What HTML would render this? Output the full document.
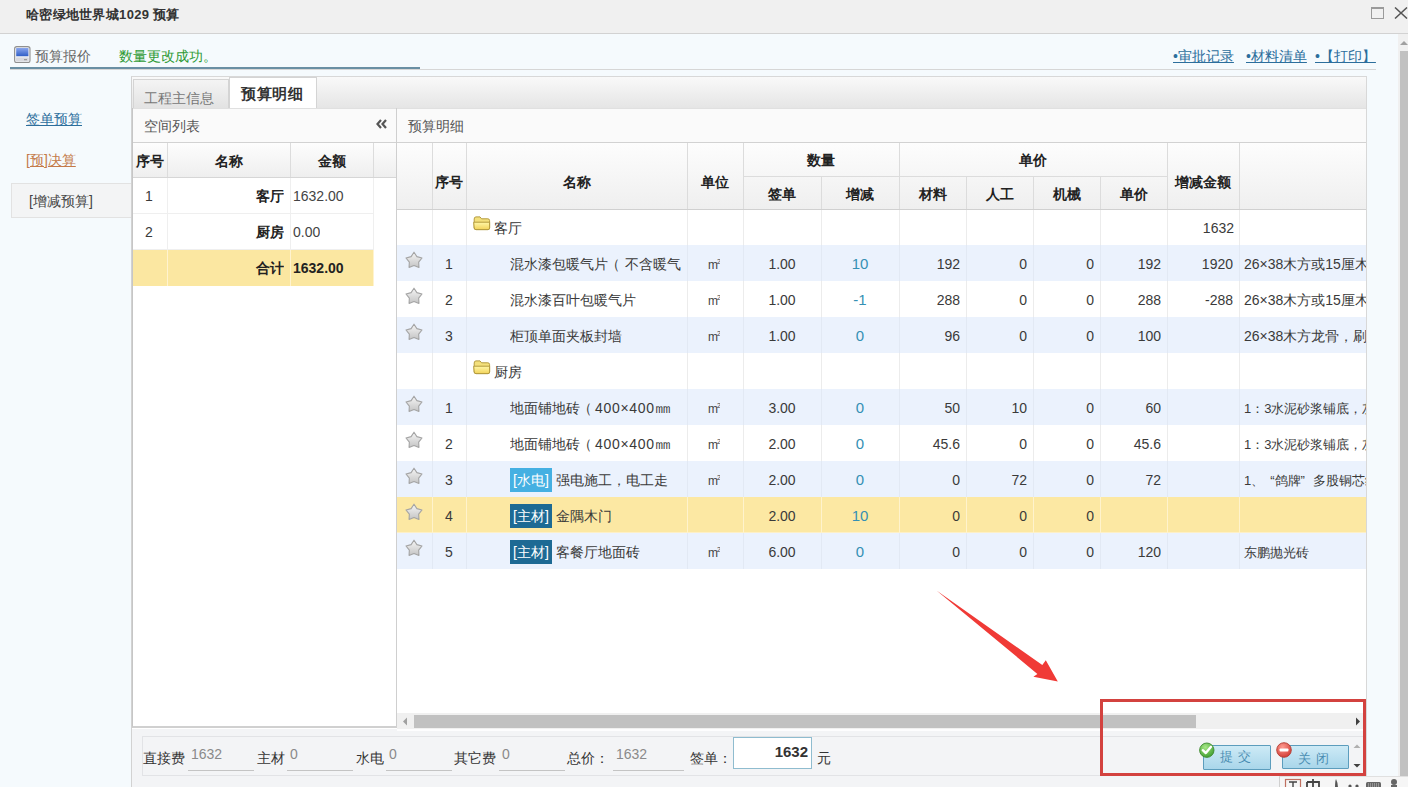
<!DOCTYPE html><html><head><meta charset="utf-8"><style>
*{margin:0;padding:0;box-sizing:border-box}
html,body{width:1408px;height:787px;overflow:hidden}
body{position:relative;background:#f5fafd;font-family:"Liberation Sans",sans-serif;font-size:14px;color:#333}
.a{position:absolute;white-space:nowrap}
.c{position:absolute;white-space:nowrap;overflow:hidden;line-height:36px;font-size:14px;color:#3a3a3a}
.th{position:absolute;white-space:nowrap;overflow:hidden;font-weight:bold;color:#222;text-align:center;font-size:14px}
.link{color:#2c6e9c;text-decoration:underline}
</style></head><body>
<div class="a" style="left:0;top:0;width:1408px;height:34px;background:#f0f0f0;border-bottom:1px solid #d2d2d2"></div>
<div class="a" style="left:26px;top:6px;font-size:13px;font-weight:bold;color:#333;line-height:18px;letter-spacing:0.3px">哈密绿地世界城1029 预算</div>
<div class="a" style="left:1371px;top:7px;width:13px;height:12px;border:1px solid #9a9a9a;border-top-width:2px"></div>
<svg class="a" style="left:1394px;top:7px" width="14" height="12"><path d="M1 0.5L13 11.5M13 0.5L1 11.5" stroke="#555" stroke-width="1.5"/></svg>
<div class="a" style="left:1398px;top:34px;width:10px;height:753px;background:#f0f0f0"></div>
<svg class="a" style="left:1400px;top:40px" width="8" height="6"><path d="M0 5L4 1L8 5Z" fill="#a0a0a0"/></svg>
<div class="a" style="left:1400px;top:51px;width:8px;height:736px;background:#c1c1c1"></div>
<svg class="a" style="left:14px;top:46px" width="17" height="17" viewBox="0 0 17 17"><defs><linearGradient id="scr" x1="0" y1="0" x2="0" y2="1"><stop offset="0" stop-color="#8aa6ee"/><stop offset="1" stop-color="#2f5ec6"/></linearGradient></defs><rect x="0.6" y="0.6" width="15.4" height="16" rx="2.2" fill="#eef0f4" stroke="#909090" stroke-width="1.1"/><rect x="2.2" y="2" width="12.2" height="8.2" fill="url(#scr)"/><rect x="2" y="11.4" width="12.6" height="4" rx="0.8" fill="#d8d9de"/><rect x="10" y="13.2" width="3" height="1" fill="#8a8a8a"/></svg>
<div class="a" style="left:35px;top:47px;line-height:18px;color:#666">预算报价</div>
<div class="a" style="left:119px;top:47px;line-height:18px;color:#2f9a36">数量更改成功。</div>
<div class="a" style="left:10px;top:69px;width:1366px;height:1px;background:#d6d6d6"></div>
<div class="a" style="left:10px;top:67px;width:410px;height:2px;background:#6a8fa3"></div>
<div class="a link" style="left:1173px;top:47px;line-height:18px">•审批记录</div>
<div class="a link" style="left:1246px;top:47px;line-height:18px">•材料清单</div>
<div class="a link" style="left:1315px;top:47px;line-height:18px">•【打印】</div>
<div class="a link" style="left:26px;top:110px;line-height:18px;color:#2c6e9c">签单预算</div>
<div class="a link" style="left:26px;top:151px;line-height:18px;color:#c47a4a">[预]决算</div>
<div class="a" style="left:11px;top:183px;width:122px;height:35px;background:#f3f4f5;border:1px solid #e2e2e2;border-right:none"></div>
<div class="a" style="left:29px;top:192px;line-height:18px;color:#444">[增减预算]</div>
<div class="a" style="left:131px;top:76px;width:1236px;height:711px;border:1px solid #d8d8d8;border-left:1px solid #d2d2d2;border-bottom:none;background:#fff"></div>
<div class="a" style="left:132px;top:77px;width:1234px;height:32px;background:linear-gradient(#f9f9f9,#e5e5e5);border-bottom:1px solid #cfcfcf"></div>
<div class="a" style="left:133px;top:79px;width:96px;height:30px;background:linear-gradient(#f4f4f4,#e2e2e2);border:1px solid #d4d4d4;border-bottom:none"></div>
<div class="a" style="left:144px;top:89px;line-height:18px;color:#777">工程主信息</div>
<div class="a" style="left:229px;top:77px;width:88px;height:32px;background:#fff;border:1px solid #d4d4d4;border-bottom:none"></div>
<div class="a" style="left:241px;top:85px;line-height:18px;color:#333;font-weight:bold;font-size:15px;letter-spacing:0.5px">预算明细</div>
<div class="a" style="left:132px;top:108px;width:265px;height:620px;background:#fff;border-left:1px solid #c6c6c6;border-right:1px solid #cfcfcf;border-bottom:2px solid #d0d0d0"></div>
<div class="a" style="left:133px;top:108px;width:263px;height:36px;background:#fafafa;border-bottom:2px solid #d2d2d2;border-top:1px solid #e0e0e0"></div>
<div class="a" style="left:144px;top:117px;line-height:18px;color:#555">空间列表</div>
<svg class="a" style="left:376px;top:119px" width="11" height="10"><path d="M5 1L1.5 5L5 9M10 1L6.5 5L10 9" stroke="#555" stroke-width="2.2" fill="none"/></svg>
<div class="a" style="left:133px;top:143px;width:263px;height:35px;background:linear-gradient(#fdfdfd,#eeeeee)"></div>
<div class="a" style="left:167px;top:143px;width:1px;height:35px;background:#dcdcdc"></div>
<div class="a" style="left:290px;top:143px;width:1px;height:35px;background:#dcdcdc"></div>
<div class="a" style="left:373px;top:143px;width:1px;height:35px;background:#dcdcdc"></div>
<div class="th" style="left:133px;top:144px;width:34px;line-height:35px">序号</div>
<div class="th" style="left:167px;top:144px;width:123px;line-height:35px">名称</div>
<div class="th" style="left:290px;top:144px;width:83px;line-height:35px">金额</div>
<div class="a" style="left:133px;top:178px;width:240px;height:36px;background:#fff;border-bottom:1px solid #efefef"></div>
<div class="a" style="left:167px;top:178px;width:1px;height:36px;background:#efefef"></div>
<div class="a" style="left:290px;top:178px;width:1px;height:36px;background:#efefef"></div>
<div class="a" style="left:373px;top:178px;width:1px;height:36px;background:#efefef"></div>
<div class="c" style="left:145px;top:178px">1</div>
<div class="c" style="left:167px;top:178px;width:117px;text-align:right;font-weight:bold;color:#222">客厅</div>
<div class="c" style="left:293px;top:178px;font-weight:normal;color:#444">1632.00</div>
<div class="a" style="left:133px;top:214px;width:240px;height:36px;background:#fff;border-bottom:1px solid #efefef"></div>
<div class="a" style="left:167px;top:214px;width:1px;height:36px;background:#efefef"></div>
<div class="a" style="left:290px;top:214px;width:1px;height:36px;background:#efefef"></div>
<div class="a" style="left:373px;top:214px;width:1px;height:36px;background:#efefef"></div>
<div class="c" style="left:145px;top:214px">2</div>
<div class="c" style="left:167px;top:214px;width:117px;text-align:right;font-weight:bold;color:#222">厨房</div>
<div class="c" style="left:293px;top:214px;font-weight:normal;color:#444">0.00</div>
<div class="a" style="left:133px;top:250px;width:240px;height:36px;background:#fbe7a1;border-bottom:1px solid #fbe7a1"></div>
<div class="a" style="left:167px;top:250px;width:1px;height:36px;background:#fff3cf"></div>
<div class="a" style="left:290px;top:250px;width:1px;height:36px;background:#fff3cf"></div>
<div class="a" style="left:373px;top:250px;width:1px;height:36px;background:#fff3cf"></div>
<div class="c" style="left:145px;top:250px"></div>
<div class="c" style="left:167px;top:250px;width:117px;text-align:right;font-weight:bold;color:#222">合计</div>
<div class="c" style="left:293px;top:250px;font-weight:bold;color:#222">1632.00</div>
<div class="a" style="left:397px;top:108px;width:969px;height:35px;background:#fafafa;border-bottom:1px solid #d2d2d2;border-top:1px solid #e0e0e0"></div>
<div class="a" style="left:408px;top:117px;line-height:18px;color:#555">预算明细</div>
<div class="a" style="left:397px;top:143px;width:969px;height:66px;background:linear-gradient(#fdfdfd,#efefef)"></div>
<div class="a" style="left:743px;top:176px;width:424px;height:1px;background:#dcdcdc"></div>
<div class="a" style="left:432px;top:143px;width:1px;height:66px;background:#dcdcdc"></div>
<div class="a" style="left:466px;top:143px;width:1px;height:66px;background:#dcdcdc"></div>
<div class="a" style="left:687px;top:143px;width:1px;height:66px;background:#dcdcdc"></div>
<div class="a" style="left:743px;top:143px;width:1px;height:66px;background:#dcdcdc"></div>
<div class="a" style="left:821px;top:176px;width:1px;height:33px;background:#dcdcdc"></div>
<div class="a" style="left:899px;top:143px;width:1px;height:66px;background:#dcdcdc"></div>
<div class="a" style="left:966px;top:176px;width:1px;height:33px;background:#dcdcdc"></div>
<div class="a" style="left:1033px;top:176px;width:1px;height:33px;background:#dcdcdc"></div>
<div class="a" style="left:1100px;top:176px;width:1px;height:33px;background:#dcdcdc"></div>
<div class="a" style="left:1167px;top:143px;width:1px;height:66px;background:#dcdcdc"></div>
<div class="a" style="left:1239px;top:143px;width:1px;height:66px;background:#dcdcdc"></div>
<div class="th" style="left:432px;top:149px;width:34px;line-height:66px">序号</div>
<div class="th" style="left:466px;top:149px;width:221px;line-height:66px">名称</div>
<div class="th" style="left:687px;top:149px;width:56px;line-height:66px">单位</div>
<div class="th" style="left:743px;top:144px;width:156px;line-height:33px">数量</div>
<div class="th" style="left:743px;top:178px;width:78px;line-height:33px">签单</div>
<div class="th" style="left:821px;top:178px;width:78px;line-height:33px">增减</div>
<div class="th" style="left:899px;top:144px;width:268px;line-height:33px">单价</div>
<div class="th" style="left:899px;top:178px;width:67px;line-height:33px">材料</div>
<div class="th" style="left:966px;top:178px;width:67px;line-height:33px">人工</div>
<div class="th" style="left:1033px;top:178px;width:67px;line-height:33px">机械</div>
<div class="th" style="left:1100px;top:178px;width:67px;line-height:33px">单价</div>
<div class="th" style="left:1167px;top:149px;width:72px;line-height:66px">增减金额</div>
<div class="a" style="left:397px;top:209px;width:969px;height:36px;background:#fff"></div>
<div class="a" style="left:432px;top:209px;width:1px;height:36px;background:#ececec"></div>
<div class="a" style="left:466px;top:209px;width:1px;height:36px;background:#ececec"></div>
<div class="a" style="left:687px;top:209px;width:1px;height:36px;background:#ececec"></div>
<div class="a" style="left:743px;top:209px;width:1px;height:36px;background:#ececec"></div>
<div class="a" style="left:821px;top:209px;width:1px;height:36px;background:#ececec"></div>
<div class="a" style="left:899px;top:209px;width:1px;height:36px;background:#ececec"></div>
<div class="a" style="left:966px;top:209px;width:1px;height:36px;background:#ececec"></div>
<div class="a" style="left:1033px;top:209px;width:1px;height:36px;background:#ececec"></div>
<div class="a" style="left:1100px;top:209px;width:1px;height:36px;background:#ececec"></div>
<div class="a" style="left:1167px;top:209px;width:1px;height:36px;background:#ececec"></div>
<div class="a" style="left:1239px;top:209px;width:1px;height:36px;background:#ececec"></div>
<svg class="a" style="left:473px;top:216px" width="18" height="15" viewBox="0 0 18 15"><defs><linearGradient id="fg" x1="0" y1="0" x2="0" y2="1"><stop offset="0" stop-color="#fff7a8"/><stop offset="1" stop-color="#f2d35a"/></linearGradient></defs><path d="M1.2 3Q1.2 0.9 3 0.9L7 0.9L8.6 2.8L14.8 2.8Q16.6 2.8 16.6 4.6L16.6 12Q16.6 13.6 15 13.6L3 13.6Q1.2 13.6 1.2 12Z" fill="#f3e07c" stroke="#b49b3e" stroke-width="1"/><path d="M0.7 6.2L16.6 6.2L16.6 12Q16.6 13.6 15 13.6L3 13.6Q1.4 13.6 1.2 12Z" fill="url(#fg)" stroke="#b49b3e" stroke-width="1"/></svg>
<div class="c" style="left:494px;top:210px;color:#333">客厅</div>
<div class="c" style="left:1167px;top:210px;width:67px;text-align:right">1632</div>
<div class="a" style="left:397px;top:245px;width:969px;height:36px;background:#ebf2fd"></div>
<div class="a" style="left:432px;top:245px;width:1px;height:36px;background:#e2e9f4"></div>
<div class="a" style="left:466px;top:245px;width:1px;height:36px;background:#e2e9f4"></div>
<div class="a" style="left:687px;top:245px;width:1px;height:36px;background:#e2e9f4"></div>
<div class="a" style="left:743px;top:245px;width:1px;height:36px;background:#e2e9f4"></div>
<div class="a" style="left:821px;top:245px;width:1px;height:36px;background:#e2e9f4"></div>
<div class="a" style="left:899px;top:245px;width:1px;height:36px;background:#e2e9f4"></div>
<div class="a" style="left:966px;top:245px;width:1px;height:36px;background:#e2e9f4"></div>
<div class="a" style="left:1033px;top:245px;width:1px;height:36px;background:#e2e9f4"></div>
<div class="a" style="left:1100px;top:245px;width:1px;height:36px;background:#e2e9f4"></div>
<div class="a" style="left:1167px;top:245px;width:1px;height:36px;background:#e2e9f4"></div>
<div class="a" style="left:1239px;top:245px;width:1px;height:36px;background:#e2e9f4"></div>
<svg class="a" style="left:405px;top:251px" width="18" height="18" viewBox="0 0 18 18"><defs><linearGradient id="sg" x1="0" y1="0" x2="0" y2="1"><stop offset="0" stop-color="#f6f6f6"/><stop offset="1" stop-color="#c4c4c4"/></linearGradient></defs><path d="M9.00 1.20L11.88 5.64L16.99 7.00L13.66 11.11L13.94 16.40L9.00 14.50L4.06 16.40L4.34 11.11L1.01 7.00L6.12 5.64Z" fill="url(#sg)" stroke="#a4a4a4" stroke-width="1.1" stroke-linejoin="round"/></svg>
<div class="c" style="left:445px;top:246px">1</div>
<div class="c" style="left:510px;top:246px;width:175px">混水漆包暖气片<span style="margin-left:-2px;margin-right:5px">（</span>不含暖气</div>
<div class="c" style="left:708px;top:244px;font-size:12px;letter-spacing:-1px;color:#444">m<span style="font-size:7px;vertical-align:5px">2</span></div>
<div class="c" style="left:743px;top:246px;width:78px;text-align:center">1.00</div>
<div class="c" style="left:821px;top:246px;width:78px;text-align:center;color:#3590b4;font-size:15px">10</div>
<div class="c" style="left:899px;top:246px;width:61px;text-align:right">192</div>
<div class="c" style="left:966px;top:246px;width:61px;text-align:right">0</div>
<div class="c" style="left:1033px;top:246px;width:61px;text-align:right">0</div>
<div class="c" style="left:1100px;top:246px;width:61px;text-align:right">192</div>
<div class="c" style="left:1167px;top:246px;width:66px;text-align:right">1920</div>
<div class="c" style="left:1244px;top:246px;width:122px;font-size:14px">26×38木方或15厘木</div>
<div class="a" style="left:397px;top:281px;width:969px;height:36px;background:#fff"></div>
<div class="a" style="left:432px;top:281px;width:1px;height:36px;background:#ececec"></div>
<div class="a" style="left:466px;top:281px;width:1px;height:36px;background:#ececec"></div>
<div class="a" style="left:687px;top:281px;width:1px;height:36px;background:#ececec"></div>
<div class="a" style="left:743px;top:281px;width:1px;height:36px;background:#ececec"></div>
<div class="a" style="left:821px;top:281px;width:1px;height:36px;background:#ececec"></div>
<div class="a" style="left:899px;top:281px;width:1px;height:36px;background:#ececec"></div>
<div class="a" style="left:966px;top:281px;width:1px;height:36px;background:#ececec"></div>
<div class="a" style="left:1033px;top:281px;width:1px;height:36px;background:#ececec"></div>
<div class="a" style="left:1100px;top:281px;width:1px;height:36px;background:#ececec"></div>
<div class="a" style="left:1167px;top:281px;width:1px;height:36px;background:#ececec"></div>
<div class="a" style="left:1239px;top:281px;width:1px;height:36px;background:#ececec"></div>
<svg class="a" style="left:405px;top:287px" width="18" height="18" viewBox="0 0 18 18"><defs><linearGradient id="sg" x1="0" y1="0" x2="0" y2="1"><stop offset="0" stop-color="#f6f6f6"/><stop offset="1" stop-color="#c4c4c4"/></linearGradient></defs><path d="M9.00 1.20L11.88 5.64L16.99 7.00L13.66 11.11L13.94 16.40L9.00 14.50L4.06 16.40L4.34 11.11L1.01 7.00L6.12 5.64Z" fill="url(#sg)" stroke="#a4a4a4" stroke-width="1.1" stroke-linejoin="round"/></svg>
<div class="c" style="left:445px;top:282px">2</div>
<div class="c" style="left:510px;top:282px;width:175px">混水漆百叶包暖气片</div>
<div class="c" style="left:708px;top:280px;font-size:12px;letter-spacing:-1px;color:#444">m<span style="font-size:7px;vertical-align:5px">2</span></div>
<div class="c" style="left:743px;top:282px;width:78px;text-align:center">1.00</div>
<div class="c" style="left:821px;top:282px;width:78px;text-align:center;color:#3590b4;font-size:15px">-1</div>
<div class="c" style="left:899px;top:282px;width:61px;text-align:right">288</div>
<div class="c" style="left:966px;top:282px;width:61px;text-align:right">0</div>
<div class="c" style="left:1033px;top:282px;width:61px;text-align:right">0</div>
<div class="c" style="left:1100px;top:282px;width:61px;text-align:right">288</div>
<div class="c" style="left:1167px;top:282px;width:66px;text-align:right">-288</div>
<div class="c" style="left:1244px;top:282px;width:122px;font-size:14px">26×38木方或15厘木</div>
<div class="a" style="left:397px;top:317px;width:969px;height:36px;background:#ebf2fd"></div>
<div class="a" style="left:432px;top:317px;width:1px;height:36px;background:#e2e9f4"></div>
<div class="a" style="left:466px;top:317px;width:1px;height:36px;background:#e2e9f4"></div>
<div class="a" style="left:687px;top:317px;width:1px;height:36px;background:#e2e9f4"></div>
<div class="a" style="left:743px;top:317px;width:1px;height:36px;background:#e2e9f4"></div>
<div class="a" style="left:821px;top:317px;width:1px;height:36px;background:#e2e9f4"></div>
<div class="a" style="left:899px;top:317px;width:1px;height:36px;background:#e2e9f4"></div>
<div class="a" style="left:966px;top:317px;width:1px;height:36px;background:#e2e9f4"></div>
<div class="a" style="left:1033px;top:317px;width:1px;height:36px;background:#e2e9f4"></div>
<div class="a" style="left:1100px;top:317px;width:1px;height:36px;background:#e2e9f4"></div>
<div class="a" style="left:1167px;top:317px;width:1px;height:36px;background:#e2e9f4"></div>
<div class="a" style="left:1239px;top:317px;width:1px;height:36px;background:#e2e9f4"></div>
<svg class="a" style="left:405px;top:323px" width="18" height="18" viewBox="0 0 18 18"><defs><linearGradient id="sg" x1="0" y1="0" x2="0" y2="1"><stop offset="0" stop-color="#f6f6f6"/><stop offset="1" stop-color="#c4c4c4"/></linearGradient></defs><path d="M9.00 1.20L11.88 5.64L16.99 7.00L13.66 11.11L13.94 16.40L9.00 14.50L4.06 16.40L4.34 11.11L1.01 7.00L6.12 5.64Z" fill="url(#sg)" stroke="#a4a4a4" stroke-width="1.1" stroke-linejoin="round"/></svg>
<div class="c" style="left:445px;top:318px">3</div>
<div class="c" style="left:510px;top:318px;width:175px">柜顶单面夹板封墙</div>
<div class="c" style="left:708px;top:316px;font-size:12px;letter-spacing:-1px;color:#444">m<span style="font-size:7px;vertical-align:5px">2</span></div>
<div class="c" style="left:743px;top:318px;width:78px;text-align:center">1.00</div>
<div class="c" style="left:821px;top:318px;width:78px;text-align:center;color:#3590b4;font-size:15px">0</div>
<div class="c" style="left:899px;top:318px;width:61px;text-align:right">96</div>
<div class="c" style="left:966px;top:318px;width:61px;text-align:right">0</div>
<div class="c" style="left:1033px;top:318px;width:61px;text-align:right">0</div>
<div class="c" style="left:1100px;top:318px;width:61px;text-align:right">100</div>
<div class="c" style="left:1167px;top:318px;width:66px;text-align:right"></div>
<div class="c" style="left:1244px;top:318px;width:122px;font-size:14px">26×38木方龙骨，刷防</div>
<div class="a" style="left:397px;top:353px;width:969px;height:36px;background:#fff"></div>
<div class="a" style="left:432px;top:353px;width:1px;height:36px;background:#ececec"></div>
<div class="a" style="left:466px;top:353px;width:1px;height:36px;background:#ececec"></div>
<div class="a" style="left:687px;top:353px;width:1px;height:36px;background:#ececec"></div>
<div class="a" style="left:743px;top:353px;width:1px;height:36px;background:#ececec"></div>
<div class="a" style="left:821px;top:353px;width:1px;height:36px;background:#ececec"></div>
<div class="a" style="left:899px;top:353px;width:1px;height:36px;background:#ececec"></div>
<div class="a" style="left:966px;top:353px;width:1px;height:36px;background:#ececec"></div>
<div class="a" style="left:1033px;top:353px;width:1px;height:36px;background:#ececec"></div>
<div class="a" style="left:1100px;top:353px;width:1px;height:36px;background:#ececec"></div>
<div class="a" style="left:1167px;top:353px;width:1px;height:36px;background:#ececec"></div>
<div class="a" style="left:1239px;top:353px;width:1px;height:36px;background:#ececec"></div>
<svg class="a" style="left:473px;top:360px" width="18" height="15" viewBox="0 0 18 15"><defs><linearGradient id="fg" x1="0" y1="0" x2="0" y2="1"><stop offset="0" stop-color="#fff7a8"/><stop offset="1" stop-color="#f2d35a"/></linearGradient></defs><path d="M1.2 3Q1.2 0.9 3 0.9L7 0.9L8.6 2.8L14.8 2.8Q16.6 2.8 16.6 4.6L16.6 12Q16.6 13.6 15 13.6L3 13.6Q1.2 13.6 1.2 12Z" fill="#f3e07c" stroke="#b49b3e" stroke-width="1"/><path d="M0.7 6.2L16.6 6.2L16.6 12Q16.6 13.6 15 13.6L3 13.6Q1.4 13.6 1.2 12Z" fill="url(#fg)" stroke="#b49b3e" stroke-width="1"/></svg>
<div class="c" style="left:494px;top:354px;color:#333">厨房</div>
<div class="a" style="left:397px;top:389px;width:969px;height:36px;background:#ebf2fd"></div>
<div class="a" style="left:432px;top:389px;width:1px;height:36px;background:#e2e9f4"></div>
<div class="a" style="left:466px;top:389px;width:1px;height:36px;background:#e2e9f4"></div>
<div class="a" style="left:687px;top:389px;width:1px;height:36px;background:#e2e9f4"></div>
<div class="a" style="left:743px;top:389px;width:1px;height:36px;background:#e2e9f4"></div>
<div class="a" style="left:821px;top:389px;width:1px;height:36px;background:#e2e9f4"></div>
<div class="a" style="left:899px;top:389px;width:1px;height:36px;background:#e2e9f4"></div>
<div class="a" style="left:966px;top:389px;width:1px;height:36px;background:#e2e9f4"></div>
<div class="a" style="left:1033px;top:389px;width:1px;height:36px;background:#e2e9f4"></div>
<div class="a" style="left:1100px;top:389px;width:1px;height:36px;background:#e2e9f4"></div>
<div class="a" style="left:1167px;top:389px;width:1px;height:36px;background:#e2e9f4"></div>
<div class="a" style="left:1239px;top:389px;width:1px;height:36px;background:#e2e9f4"></div>
<svg class="a" style="left:405px;top:395px" width="18" height="18" viewBox="0 0 18 18"><defs><linearGradient id="sg" x1="0" y1="0" x2="0" y2="1"><stop offset="0" stop-color="#f6f6f6"/><stop offset="1" stop-color="#c4c4c4"/></linearGradient></defs><path d="M9.00 1.20L11.88 5.64L16.99 7.00L13.66 11.11L13.94 16.40L9.00 14.50L4.06 16.40L4.34 11.11L1.01 7.00L6.12 5.64Z" fill="url(#sg)" stroke="#a4a4a4" stroke-width="1.1" stroke-linejoin="round"/></svg>
<div class="c" style="left:445px;top:390px">1</div>
<div class="c" style="left:510px;top:390px;width:175px">地面铺地砖<span style="margin-left:-2px;margin-right:3px">（</span><span style="letter-spacing:0.7px">400×400</span><span style="font-size:16px">㎜</span></div>
<div class="c" style="left:708px;top:388px;font-size:12px;letter-spacing:-1px;color:#444">m<span style="font-size:7px;vertical-align:5px">2</span></div>
<div class="c" style="left:743px;top:390px;width:78px;text-align:center">3.00</div>
<div class="c" style="left:821px;top:390px;width:78px;text-align:center;color:#3590b4;font-size:15px">0</div>
<div class="c" style="left:899px;top:390px;width:61px;text-align:right">50</div>
<div class="c" style="left:966px;top:390px;width:61px;text-align:right">10</div>
<div class="c" style="left:1033px;top:390px;width:61px;text-align:right">0</div>
<div class="c" style="left:1100px;top:390px;width:61px;text-align:right">60</div>
<div class="c" style="left:1167px;top:390px;width:66px;text-align:right"></div>
<div class="c" style="left:1244px;top:391px;width:122px;font-size:13px">1：3水泥砂浆铺底，灰</div>
<div class="a" style="left:397px;top:425px;width:969px;height:36px;background:#fff"></div>
<div class="a" style="left:432px;top:425px;width:1px;height:36px;background:#ececec"></div>
<div class="a" style="left:466px;top:425px;width:1px;height:36px;background:#ececec"></div>
<div class="a" style="left:687px;top:425px;width:1px;height:36px;background:#ececec"></div>
<div class="a" style="left:743px;top:425px;width:1px;height:36px;background:#ececec"></div>
<div class="a" style="left:821px;top:425px;width:1px;height:36px;background:#ececec"></div>
<div class="a" style="left:899px;top:425px;width:1px;height:36px;background:#ececec"></div>
<div class="a" style="left:966px;top:425px;width:1px;height:36px;background:#ececec"></div>
<div class="a" style="left:1033px;top:425px;width:1px;height:36px;background:#ececec"></div>
<div class="a" style="left:1100px;top:425px;width:1px;height:36px;background:#ececec"></div>
<div class="a" style="left:1167px;top:425px;width:1px;height:36px;background:#ececec"></div>
<div class="a" style="left:1239px;top:425px;width:1px;height:36px;background:#ececec"></div>
<svg class="a" style="left:405px;top:431px" width="18" height="18" viewBox="0 0 18 18"><defs><linearGradient id="sg" x1="0" y1="0" x2="0" y2="1"><stop offset="0" stop-color="#f6f6f6"/><stop offset="1" stop-color="#c4c4c4"/></linearGradient></defs><path d="M9.00 1.20L11.88 5.64L16.99 7.00L13.66 11.11L13.94 16.40L9.00 14.50L4.06 16.40L4.34 11.11L1.01 7.00L6.12 5.64Z" fill="url(#sg)" stroke="#a4a4a4" stroke-width="1.1" stroke-linejoin="round"/></svg>
<div class="c" style="left:445px;top:426px">2</div>
<div class="c" style="left:510px;top:426px;width:175px">地面铺地砖<span style="margin-left:-2px;margin-right:3px">（</span><span style="letter-spacing:0.7px">400×400</span><span style="font-size:16px">㎜</span></div>
<div class="c" style="left:708px;top:424px;font-size:12px;letter-spacing:-1px;color:#444">m<span style="font-size:7px;vertical-align:5px">2</span></div>
<div class="c" style="left:743px;top:426px;width:78px;text-align:center">2.00</div>
<div class="c" style="left:821px;top:426px;width:78px;text-align:center;color:#3590b4;font-size:15px">0</div>
<div class="c" style="left:899px;top:426px;width:61px;text-align:right">45.6</div>
<div class="c" style="left:966px;top:426px;width:61px;text-align:right">0</div>
<div class="c" style="left:1033px;top:426px;width:61px;text-align:right">0</div>
<div class="c" style="left:1100px;top:426px;width:61px;text-align:right">45.6</div>
<div class="c" style="left:1167px;top:426px;width:66px;text-align:right"></div>
<div class="c" style="left:1244px;top:427px;width:122px;font-size:13px">1：3水泥砂浆铺底，灰</div>
<div class="a" style="left:397px;top:461px;width:969px;height:36px;background:#ebf2fd"></div>
<div class="a" style="left:432px;top:461px;width:1px;height:36px;background:#e2e9f4"></div>
<div class="a" style="left:466px;top:461px;width:1px;height:36px;background:#e2e9f4"></div>
<div class="a" style="left:687px;top:461px;width:1px;height:36px;background:#e2e9f4"></div>
<div class="a" style="left:743px;top:461px;width:1px;height:36px;background:#e2e9f4"></div>
<div class="a" style="left:821px;top:461px;width:1px;height:36px;background:#e2e9f4"></div>
<div class="a" style="left:899px;top:461px;width:1px;height:36px;background:#e2e9f4"></div>
<div class="a" style="left:966px;top:461px;width:1px;height:36px;background:#e2e9f4"></div>
<div class="a" style="left:1033px;top:461px;width:1px;height:36px;background:#e2e9f4"></div>
<div class="a" style="left:1100px;top:461px;width:1px;height:36px;background:#e2e9f4"></div>
<div class="a" style="left:1167px;top:461px;width:1px;height:36px;background:#e2e9f4"></div>
<div class="a" style="left:1239px;top:461px;width:1px;height:36px;background:#e2e9f4"></div>
<svg class="a" style="left:405px;top:467px" width="18" height="18" viewBox="0 0 18 18"><defs><linearGradient id="sg" x1="0" y1="0" x2="0" y2="1"><stop offset="0" stop-color="#f6f6f6"/><stop offset="1" stop-color="#c4c4c4"/></linearGradient></defs><path d="M9.00 1.20L11.88 5.64L16.99 7.00L13.66 11.11L13.94 16.40L9.00 14.50L4.06 16.40L4.34 11.11L1.01 7.00L6.12 5.64Z" fill="url(#sg)" stroke="#a4a4a4" stroke-width="1.1" stroke-linejoin="round"/></svg>
<div class="c" style="left:445px;top:462px">3</div>
<div class="a" style="left:510px;top:468px;height:24px;width:42px;background:#45b0e2;color:#fff;line-height:24px;text-align:center">[水电]</div>
<div class="c" style="left:556px;top:462px">强电施工，电工走</div>
<div class="c" style="left:708px;top:460px;font-size:12px;letter-spacing:-1px;color:#444">m<span style="font-size:7px;vertical-align:5px">2</span></div>
<div class="c" style="left:743px;top:462px;width:78px;text-align:center">2.00</div>
<div class="c" style="left:821px;top:462px;width:78px;text-align:center;color:#3590b4;font-size:15px">0</div>
<div class="c" style="left:899px;top:462px;width:61px;text-align:right">0</div>
<div class="c" style="left:966px;top:462px;width:61px;text-align:right">72</div>
<div class="c" style="left:1033px;top:462px;width:61px;text-align:right">0</div>
<div class="c" style="left:1100px;top:462px;width:61px;text-align:right">72</div>
<div class="c" style="left:1167px;top:462px;width:66px;text-align:right"></div>
<div class="c" style="left:1244px;top:463px;width:122px;font-size:13px">1、<span style="margin-left:6px">“</span>鸽牌<span style="margin-right:8px">”</span>多股铜芯线</div>
<div class="a" style="left:397px;top:497px;width:969px;height:36px;background:#fce8a3"></div>
<div class="a" style="left:397px;top:532px;width:969px;height:1px;background:#fdf0c8"></div>
<div class="a" style="left:432px;top:497px;width:1px;height:36px;background:#fff3cc"></div>
<div class="a" style="left:466px;top:497px;width:1px;height:36px;background:#fff3cc"></div>
<div class="a" style="left:687px;top:497px;width:1px;height:36px;background:#fff3cc"></div>
<div class="a" style="left:743px;top:497px;width:1px;height:36px;background:#fff3cc"></div>
<div class="a" style="left:821px;top:497px;width:1px;height:36px;background:#fff3cc"></div>
<div class="a" style="left:899px;top:497px;width:1px;height:36px;background:#fff3cc"></div>
<div class="a" style="left:966px;top:497px;width:1px;height:36px;background:#fff3cc"></div>
<div class="a" style="left:1033px;top:497px;width:1px;height:36px;background:#fff3cc"></div>
<div class="a" style="left:1100px;top:497px;width:1px;height:36px;background:#fff3cc"></div>
<div class="a" style="left:1167px;top:497px;width:1px;height:36px;background:#fff3cc"></div>
<div class="a" style="left:1239px;top:497px;width:1px;height:36px;background:#fff3cc"></div>
<svg class="a" style="left:405px;top:503px" width="18" height="18" viewBox="0 0 18 18"><defs><linearGradient id="sg" x1="0" y1="0" x2="0" y2="1"><stop offset="0" stop-color="#f6f6f6"/><stop offset="1" stop-color="#c4c4c4"/></linearGradient></defs><path d="M9.00 1.20L11.88 5.64L16.99 7.00L13.66 11.11L13.94 16.40L9.00 14.50L4.06 16.40L4.34 11.11L1.01 7.00L6.12 5.64Z" fill="url(#sg)" stroke="#a4a4a4" stroke-width="1.1" stroke-linejoin="round"/></svg>
<div class="c" style="left:445px;top:498px">4</div>
<div class="a" style="left:510px;top:504px;height:24px;width:42px;background:#1d6a94;color:#fff;line-height:24px;text-align:center">[主材]</div>
<div class="c" style="left:556px;top:498px">金隅木门</div>
<div class="c" style="left:743px;top:498px;width:78px;text-align:center">2.00</div>
<div class="c" style="left:821px;top:498px;width:78px;text-align:center;color:#3590b4;font-size:15px">10</div>
<div class="c" style="left:899px;top:498px;width:61px;text-align:right">0</div>
<div class="c" style="left:966px;top:498px;width:61px;text-align:right">0</div>
<div class="c" style="left:1033px;top:498px;width:61px;text-align:right">0</div>
<div class="c" style="left:1100px;top:498px;width:61px;text-align:right"></div>
<div class="c" style="left:1167px;top:498px;width:66px;text-align:right"></div>
<div class="c" style="left:1244px;top:499px;width:122px;font-size:13px"></div>
<div class="a" style="left:397px;top:533px;width:969px;height:36px;background:#ebf2fd"></div>
<div class="a" style="left:432px;top:533px;width:1px;height:36px;background:#e2e9f4"></div>
<div class="a" style="left:466px;top:533px;width:1px;height:36px;background:#e2e9f4"></div>
<div class="a" style="left:687px;top:533px;width:1px;height:36px;background:#e2e9f4"></div>
<div class="a" style="left:743px;top:533px;width:1px;height:36px;background:#e2e9f4"></div>
<div class="a" style="left:821px;top:533px;width:1px;height:36px;background:#e2e9f4"></div>
<div class="a" style="left:899px;top:533px;width:1px;height:36px;background:#e2e9f4"></div>
<div class="a" style="left:966px;top:533px;width:1px;height:36px;background:#e2e9f4"></div>
<div class="a" style="left:1033px;top:533px;width:1px;height:36px;background:#e2e9f4"></div>
<div class="a" style="left:1100px;top:533px;width:1px;height:36px;background:#e2e9f4"></div>
<div class="a" style="left:1167px;top:533px;width:1px;height:36px;background:#e2e9f4"></div>
<div class="a" style="left:1239px;top:533px;width:1px;height:36px;background:#e2e9f4"></div>
<svg class="a" style="left:405px;top:539px" width="18" height="18" viewBox="0 0 18 18"><defs><linearGradient id="sg" x1="0" y1="0" x2="0" y2="1"><stop offset="0" stop-color="#f6f6f6"/><stop offset="1" stop-color="#c4c4c4"/></linearGradient></defs><path d="M9.00 1.20L11.88 5.64L16.99 7.00L13.66 11.11L13.94 16.40L9.00 14.50L4.06 16.40L4.34 11.11L1.01 7.00L6.12 5.64Z" fill="url(#sg)" stroke="#a4a4a4" stroke-width="1.1" stroke-linejoin="round"/></svg>
<div class="c" style="left:445px;top:534px">5</div>
<div class="a" style="left:510px;top:540px;height:24px;width:42px;background:#1d6a94;color:#fff;line-height:24px;text-align:center">[主材]</div>
<div class="c" style="left:556px;top:534px">客餐厅地面砖</div>
<div class="c" style="left:708px;top:532px;font-size:12px;letter-spacing:-1px;color:#444">m<span style="font-size:7px;vertical-align:5px">2</span></div>
<div class="c" style="left:743px;top:534px;width:78px;text-align:center">6.00</div>
<div class="c" style="left:821px;top:534px;width:78px;text-align:center;color:#3590b4;font-size:15px">0</div>
<div class="c" style="left:899px;top:534px;width:61px;text-align:right">0</div>
<div class="c" style="left:966px;top:534px;width:61px;text-align:right">0</div>
<div class="c" style="left:1033px;top:534px;width:61px;text-align:right">0</div>
<div class="c" style="left:1100px;top:534px;width:61px;text-align:right">120</div>
<div class="c" style="left:1167px;top:534px;width:66px;text-align:right"></div>
<div class="c" style="left:1244px;top:535px;width:122px;font-size:13px">东鹏抛光砖</div>
<div class="a" style="left:397px;top:209px;width:969px;height:1px;background:#d0d0d0"></div>
<div class="a" style="left:133px;top:177px;width:263px;height:1px;background:#d6d6d6"></div>
<div class="a" style="left:397px;top:713px;width:969px;height:16px;background:#f0f0f0"></div>
<div class="a" style="left:414px;top:715px;width:782px;height:13px;background:#c1c1c1"></div>
<svg class="a" style="left:402px;top:717px" width="6" height="9"><path d="M5 0.5L1 4.5L5 8.5Z" fill="#a0a0a0"/></svg>
<svg class="a" style="left:1355px;top:717px" width="6" height="9"><path d="M1 0.5L5 4.5L1 8.5Z" fill="#404040"/></svg>
<div class="a" style="left:132px;top:729px;width:1234px;height:58px;background:#f3f4f6"></div>
<div class="a" style="left:397px;top:729px;width:969px;height:2px;background:#fdfdfe"></div>
<div class="a" style="left:142px;top:736px;width:1222px;height:40px;border:1px solid #e2e3e6"></div>
<div class="a" style="left:143px;top:749px;line-height:18px;color:#333">直接费</div>
<div class="a" style="left:188px;top:770px;width:66px;height:1px;background:#c4c4c4"></div>
<div class="a" style="left:191px;top:745px;line-height:18px;color:#8a8a8a">1632</div>
<div class="a" style="left:257px;top:749px;line-height:18px;color:#333">主材</div>
<div class="a" style="left:287px;top:770px;width:66px;height:1px;background:#c4c4c4"></div>
<div class="a" style="left:290px;top:745px;line-height:18px;color:#8a8a8a">0</div>
<div class="a" style="left:356px;top:749px;line-height:18px;color:#333">水电</div>
<div class="a" style="left:386px;top:770px;width:66px;height:1px;background:#c4c4c4"></div>
<div class="a" style="left:389px;top:745px;line-height:18px;color:#8a8a8a">0</div>
<div class="a" style="left:454px;top:749px;line-height:18px;color:#333">其它费</div>
<div class="a" style="left:499px;top:770px;width:66px;height:1px;background:#c4c4c4"></div>
<div class="a" style="left:502px;top:745px;line-height:18px;color:#8a8a8a">0</div>
<div class="a" style="left:567px;top:749px;line-height:18px;color:#333">总价：</div>
<div class="a" style="left:613px;top:770px;width:71px;height:1px;background:#c4c4c4"></div>
<div class="a" style="left:616px;top:745px;line-height:18px;color:#8a8a8a">1632</div>
<div class="a" style="left:690px;top:749px;line-height:18px;color:#333">签单：</div>
<div class="a" style="left:733px;top:737px;width:79px;height:32px;background:#fff;border:1px solid #8fbccf"></div>
<div class="a" style="left:733px;top:743px;width:75px;text-align:right;line-height:18px;font-weight:bold;color:#333;font-size:15px">1632</div>
<div class="a" style="left:817px;top:749px;line-height:18px;color:#333">元</div>
<div class="a" style="left:1203px;top:745px;width:68px;height:25px;background:linear-gradient(#cdeaf6,#a9d6ea);border:1px solid #5c9dbd;border-radius:1px"></div>
<div class="a" style="left:1220px;top:749px;line-height:16px;font-size:13px;color:#4a8db2;letter-spacing:5px">提交</div>
<div class="a" style="left:1282px;top:745px;width:67px;height:24px;background:linear-gradient(#cdeaf6,#a9d6ea);border:1px solid #5c9dbd;border-radius:1px"></div>
<div class="a" style="left:1298px;top:751px;line-height:16px;font-size:13px;color:#4a8db2;letter-spacing:5px">关闭</div>
<svg class="a" style="left:1199px;top:742px" width="16" height="16" viewBox="0 0 16 16"><defs><radialGradient id="gg" cx="0.4" cy="0.3" r="0.75"><stop offset="0" stop-color="#a8e888"/><stop offset="1" stop-color="#3c9c2c"/></radialGradient></defs><circle cx="7.8" cy="8.2" r="7.2" fill="url(#gg)" stroke="#3f8a32" stroke-width="0.9"/><path d="M3.8 8.2L6.8 11L12 4.8" stroke="#fff" stroke-width="2.4" fill="none" stroke-linecap="round" stroke-linejoin="round"/></svg>
<svg class="a" style="left:1276px;top:742px" width="16" height="16" viewBox="0 0 16 16"><defs><radialGradient id="rg" cx="0.4" cy="0.3" r="0.75"><stop offset="0" stop-color="#ff9a90"/><stop offset="1" stop-color="#d03a32"/></radialGradient></defs><circle cx="8" cy="8" r="7.3" fill="url(#rg)" stroke="#b23c32" stroke-width="0.9"/><rect x="3.6" y="6.5" width="8.8" height="3" rx="0.8" fill="#fff"/></svg>
<svg class="a" style="left:1352px;top:742px" width="10" height="28"><path d="M1.5 6L5 2.5L8.5 6Z" fill="#b0b0b0"/><path d="M1.5 22L5 25.5L8.5 22Z" fill="#404040"/></svg>
<div class="a" style="left:1100px;top:699px;width:266px;height:77px;border:3px solid #d3423f"></div>
<div class="a" style="left:1279px;top:776px;width:129px;height:11px;background:#f6f6f6;border-left:1px solid #d0d0d0;border-top:1px solid #e0e0e0"></div>
<svg class="a" style="left:1279px;top:776px" width="129" height="11"><rect x="6.5" y="3.5" width="15" height="10" fill="none" stroke="#c07060" stroke-width="1.2"/><path d="M10 6H18M14 6V12" stroke="#444" stroke-width="1.4"/><path d="M28 6H40V12M28 6V12M34 3V13" stroke="#444" stroke-width="1.8" fill="none"/><path d="M56 12Q56 5 57 3Q59 7 59 12" fill="#555"/><circle cx="71" cy="10" r="1.6" fill="#555"/><circle cx="78" cy="10" r="1.6" fill="#555"/><rect x="87" y="6" width="15" height="7" rx="1.5" fill="#666"/><path d="M89 8H100M89 10H100" stroke="#ddd" stroke-width="0.8" stroke-dasharray="1 1"/><circle cx="115" cy="6" r="3" fill="#666"/><rect x="112" y="9" width="6" height="4" fill="#666"/></svg>
<svg class="a" style="left:930px;top:585px" width="140" height="105" viewBox="930 585 140 105"><path d="M936.5 590.5L1042.3 665.1L1045.8 660.3L1057.8 681.6L1033.4 676.7L1037.4 673.9Z" fill="#f03a36"/></svg>
</body></html>
